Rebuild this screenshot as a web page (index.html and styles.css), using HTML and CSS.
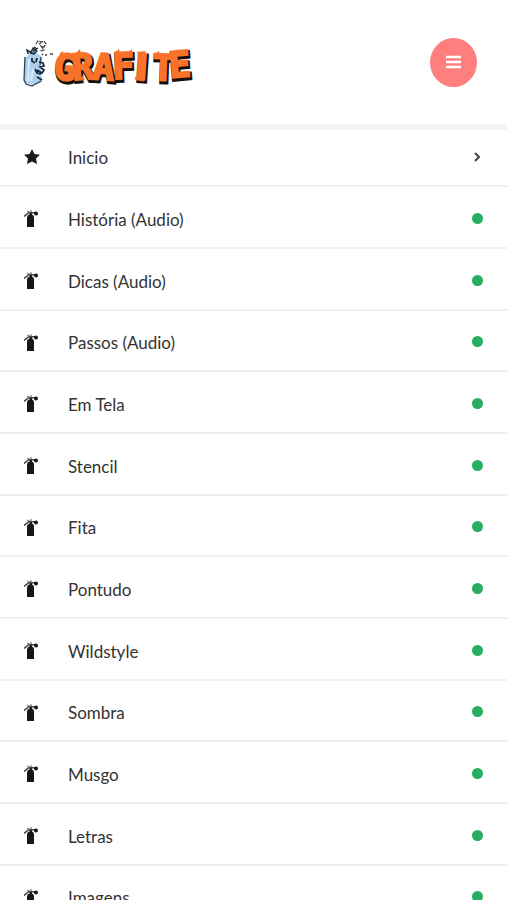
FILE: index.html
```html
<!DOCTYPE html>
<html lang="pt">
<head>
<meta charset="utf-8">
<meta name="viewport" content="width=device-width, initial-scale=1">
<title>Grafite</title>
<link rel="stylesheet" href="styles.css">
</head>
<body>
<svg width="0" height="0" class="sprite" aria-hidden="true">
  <symbol id="can" viewBox="0 0 16 18">
    <path d="M3 7.500Q3 5 5.500 4.500V2H8V4.500Q10 5 10 7.500V17H3Z" fill="#171719"/>
    <path d="M0 6.500L5 2.500L12 3" fill="none" stroke="#414247" stroke-width="1.500"/>
    <path d="M3 1L6 2.500M6 1H8" stroke="#66676b" stroke-width="1"/>
    <circle cx="12" cy="3.500" r="2" fill="#171719"/>
  </symbol>
</svg>
<header class="header">
  <a class="logo" href="#" aria-label="Grafite">
    <svg width="168" height="48" viewBox="0 0 168 48">
      <path d="M4 18Q5 14 12 14Q18 15 19 19L18 27L19 43Q11 48 3 44L1 42V19Z" fill="#add0ee"/>
      <path d="M6 20L5 42M10 30L8 42" stroke="#d8ecfb" stroke-width="2" fill="none"/>
      <path d="M2 18L1 41L3 45L9 47L18 42M18 18L17 26" fill="none" stroke="#37434e" stroke-width="1.300"/>
      <path d="M5 15L4 11L8 13L10 9L14 12L11 15L7 14M10 12L15 9M11 8L14 10" fill="#6f91ad" stroke="#202932" stroke-width="1.300"/>
      <path d="M13 5L15 2L19 3L21 2L23 5L21 8L18 7L21 11L17 12M16 5L18 4" fill="#fff" stroke="#30343a" stroke-width="1.200" stroke-dasharray="4 1"/>
      <path d="M9 19V22L12 24M14 19L13 23M16 23L20 24L21 27L17 28L21 31L19 34L14 31M12 30L14 34L18 35M14 38L19 41" fill="none" stroke="#172534" stroke-width="1.700"/>
      <path d="M19 15L20 16M22 16H24M27 15H30" stroke="#444" stroke-width="1.500"/>
      <g class="tag">
        <text class="tag-shade" x="31 51 70 91 112 130 148" y="42 43 42 42 42 43 41" rotate="5 -4 4 -2 4 2 -5">GRAF<tspan class="slim">I</tspan>TE</text>
        <text class="tag-face" x="30 50 69 90 111 129 147" y="40 41 40 40 40 41 39" rotate="5 -4 4 -2 4 2 -5">GRAF<tspan class="slim">I</tspan>TE</text>
      </g>
      <path d="M36 15L40 12L41 17ZM53 14L57 10L58 15ZM91 14L96 10L97 15ZM104 14L109 10L109 15ZM113 13L123 12L119 16ZM131 15L136 12L137 16ZM151 14L155 10L157 14Z" fill="#f97229"/>
      <path d="M112 39L121 41M58 38L61 41" fill="none" stroke="#f97229" stroke-width="3"/>
    </svg>
  </a>
  <button class="menu" type="button" aria-label="Menu">
    <svg width="16" height="14" viewBox="0 0 16 14"><path d="M0 2H15M0 7H15M0 12H15" stroke="#fff" stroke-width="2.500"/></svg>
  </button>
</header>
<nav>
  <ul class="list">
    <li><a href="#"><svg class="icon" viewBox="0 0 16 18"><path d="M8 1L10.500 6L16 6.800L12 10.600L13 16L8 13.500L3 16L4 10.600L0 6.800L5.500 6Z" fill="#1b1b1d"/></svg><span>Inicio</span><svg class="chevron" viewBox="0 0 12 12"><path d="M4 2L8 6L4 10" fill="none" stroke="#444" stroke-width="2"/></svg></a></li>
    <li><a href="#"><svg class="icon"><use href="#can"/></svg><span>História (Audio)</span><i class="dot"></i></a></li>
    <li><a href="#"><svg class="icon"><use href="#can"/></svg><span>Dicas (Audio)</span><i class="dot"></i></a></li>
    <li><a href="#"><svg class="icon"><use href="#can"/></svg><span>Passos (Audio)</span><i class="dot"></i></a></li>
    <li><a href="#"><svg class="icon"><use href="#can"/></svg><span>Em Tela</span><i class="dot"></i></a></li>
    <li><a href="#"><svg class="icon"><use href="#can"/></svg><span>Stencil</span><i class="dot"></i></a></li>
    <li><a href="#"><svg class="icon"><use href="#can"/></svg><span>Fita</span><i class="dot"></i></a></li>
    <li><a href="#"><svg class="icon"><use href="#can"/></svg><span>Pontudo</span><i class="dot"></i></a></li>
    <li><a href="#"><svg class="icon"><use href="#can"/></svg><span>Wildstyle</span><i class="dot"></i></a></li>
    <li><a href="#"><svg class="icon"><use href="#can"/></svg><span>Sombra</span><i class="dot"></i></a></li>
    <li><a href="#"><svg class="icon"><use href="#can"/></svg><span>Musgo</span><i class="dot"></i></a></li>
    <li><a href="#"><svg class="icon"><use href="#can"/></svg><span>Letras</span><i class="dot"></i></a></li>
    <li><a href="#"><svg class="icon"><use href="#can"/></svg><span>Imagens</span><i class="dot"></i></a></li>
  </ul>
</nav>
</body>
</html>
```
FILE: styles.css
```css
* {
  box-sizing: border-box;
}

html {
  scrollbar-width: none;
}

body {
  margin: 0;
  background: #fff;
  color: #333;
  font: 17px/24px Lato, "Open Sans", sans-serif;
}

.sprite {
  position: absolute;
}

.header {
  position: relative;
  display: flex;
  align-items: center;
  justify-content: space-between;
  padding: 38px 30px 37px 23px;
  box-shadow: 0 6px 0 #f4f4f4;
}

.logo,
.logo svg {
  display: block;
}

.logo svg {
  overflow: visible;
}

.tag {
  font-family: "DejaVu Sans Mono", monospace;
  font-size: 36px;
  font-weight: 700;
  stroke-linejoin: miter;
}

.slim {
  font-family: "DejaVu Sans", sans-serif;
}

.tag-shade {
  fill: #17100d;
  stroke: #17100d;
  stroke-width: 4px;
}

.tag-face {
  fill: #f97229;
  stroke: #f97229;
  stroke-width: 2px;
}

.menu {
  display: grid;
  place-items: center;
  width: 47px;
  height: 49px;
  padding: 0 0 2px;
  border: 0;
  border-radius: 50%;
  background: #ff7f7f;
}

.list {
  margin: 0;
  padding: 1px 0 0;
  list-style: none;
}

.list li {
  height: 62px;
  border-bottom: 2px solid #efefef;
}

.list li:nth-child(3n + 4) {
  height: 61px;
}

.list a {
  display: flex;
  align-items: center;
  height: 100%;
  padding: 4px 24px 0;
  color: inherit;
  text-decoration: none;
}

.list span {
  flex: 1;
  padding-top: 1px;
}

.icon {
  width: 16px;
  height: 18px;
  margin-right: 28px;
}

.dot {
  width: 11px;
  height: 11px;
  margin-bottom: 2px;
  border-radius: 50%;
  background: #27ae60;
}

.chevron {
  width: 12px;
  height: 12px;
}
```
